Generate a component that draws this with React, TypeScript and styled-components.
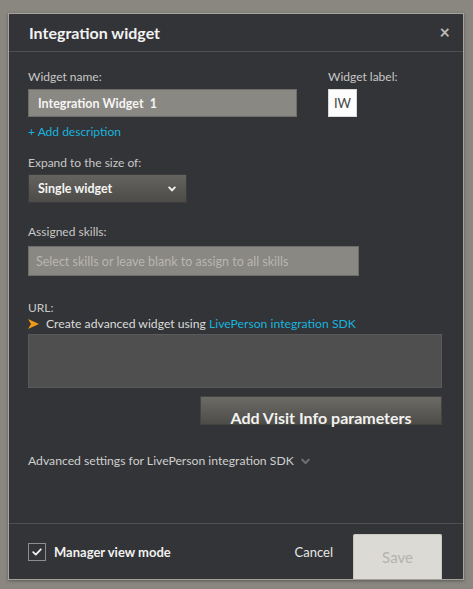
import React from "react";
import styled, { createGlobalStyle } from "styled-components";

const Global = createGlobalStyle`
  html, body { margin: 0; padding: 0; }
  body { font-family: Lato, "Open Sans", sans-serif; background: #8a8781; }
`;

const Page = styled.div`
  box-sizing: border-box;
  width: 473px;
  height: 589px;
  padding: 13px 9px 9px 8px;
  background: #8a8781;
  overflow: hidden;
`;

const Modal = styled.div`
  box-sizing: border-box;
  width: 456px;
  height: 567px;
  background: #333438;
  border: 1px solid #a6a39c;
  box-shadow: 0 1px 3px rgba(0, 0, 0, 0.35);
  display: flex;
  flex-direction: column;
`;

const Header = styled.div`
  height: 36px;
  display: flex;
  align-items: center;
  justify-content: space-between;
  padding: 0 13px 1px 20px;
  border-bottom: 1px solid #4f5054;
`;

const Title = styled.h1`
  margin: 0;
  font-size: 16px;
  font-weight: 700;
  color: #f2f2f2;
`;

const Close = styled.span`
  font-size: 18px;
  font-weight: 700;
  color: #bdbcb8;
  line-height: 1;
`;

const Body = styled.div`
  flex: 1;
  display: flex;
  flex-direction: column;
  padding: 18px 21px 0 19px;
`;

const Label = styled.div<{ $mt?: number; $mb?: number }>`
  font-size: 12px;
  line-height: 14px;
  color: #c8c8c6;
  margin-top: ${(p) => p.$mt ?? 0}px;
  margin-bottom: ${(p) => p.$mb ?? 5}px;
`;

const NameRow = styled.div`
  display: flex;
  gap: 31px;
`;

const Field = styled.div`
  display: flex;
  flex-direction: column;
`;

const TextInput = styled.div<{ $w: number; $h: number; $placeholder?: boolean }>`
  box-sizing: border-box;
  width: ${(p) => p.$w}px;
  height: ${(p) => p.$h}px;
  background: #8a8883;
  border: 1px solid #6e6d69;
  display: flex;
  align-items: center;
  padding-left: ${(p) => (p.$placeholder ? 7 : 9)}px;
  font-size: 12.5px;
  white-space: pre;
  font-weight: ${(p) => (p.$placeholder ? 400 : 700)};
  color: ${(p) => (p.$placeholder ? "#b8b6b0" : "#f5f5f3")};
`;

const LabelBox = styled.div`
  box-sizing: border-box;
  width: 29px;
  height: 28px;
  background: #fdfdfd;
  border: 1px solid #d8d8d8;
  display: flex;
  align-items: center;
  justify-content: center;
  font-size: 13px;
  color: #444;
`;

const Link = styled.span`
  color: #18b3dc;
`;

const AddDesc = styled.div`
  margin-top: 8px;
  font-size: 12px;
  line-height: 14px;
  color: #18b3dc;
`;

const Select = styled.div`
  box-sizing: border-box;
  width: 159px;
  height: 29px;
  background: linear-gradient(#64635f, #4c4b48);
  border: 1px solid #3c3c3c;
  display: flex;
  align-items: center;
  justify-content: space-between;
  padding: 0 10px 0 9px;
  font-size: 12.5px;
  font-weight: 700;
  color: #f5f5f3;
`;

const HintLine = styled.div`
  display: flex;
  align-items: center;
  gap: 7px;
  font-size: 12.2px;
  line-height: 14px;
  color: #dcdcda;
  margin-top: 2px;
`;

const UrlArea = styled.div`
  box-sizing: border-box;
  width: 414px;
  height: 54px;
  margin-top: 3px;
  background: #4f4f4f;
  border: 1px solid #5a5a5a;
`;

const WideButton = styled.div`
  box-sizing: border-box;
  align-self: flex-end;
  width: 242px;
  height: 29px;
  margin-top: 8px;
  background: linear-gradient(#6c6b66, #4d4c49);
  border: 1px solid #45443f;
  display: flex;
  justify-content: center;
  padding-top: 13px;
  font-size: 16px;
  font-weight: 700;
  color: #f2f2f0;
  line-height: 16px;
  white-space: nowrap;
`;

const Advanced = styled.div`
  display: flex;
  align-items: center;
  gap: 7px;
  margin-top: 29px;
  font-size: 12.2px;
  line-height: 14px;
  color: #cfcfcd;
`;

const Footer = styled.div`
  height: 55px;
  border-top: 1px solid #4f5054;
  display: flex;
  align-items: center;
  padding: 0 21px 0 19px;
`;

const Check = styled.div`
  box-sizing: border-box;
  width: 18px;
  height: 18px;
  border: 1px solid #8d8d8d;
  display: flex;
  align-items: center;
  justify-content: center;
`;

const CheckLabel = styled.span`
  margin-left: 8px;
  font-size: 13px;
  font-weight: 700;
  color: #f0f0ee;
  flex: 1;
`;

const Cancel = styled.span`
  font-size: 13px;
  color: #e6e6e4;
  margin-right: 20px;
`;

const Save = styled.div`
  box-sizing: border-box;
  align-self: flex-end;
  width: 89px;
  height: 45px;
  background: #dcdad5;
  border: 1px solid #c9c7c1;
  border-bottom: none;
  border-radius: 2px 2px 0 0;
  display: flex;
  align-items: center;
  justify-content: center;
  font-size: 15px;
  color: #b5b3ae;
`;

const Chevron = ({ color, size }: { color: string; size: number }) => (
  <svg width={size} height={size} viewBox="0 0 10 10">
    <path d="M1.5 3 L5 6.8 L8.5 3" fill="none" stroke={color} strokeWidth="2.4" strokeLinecap="round" strokeLinejoin="round" />
  </svg>
);

export default function App() {
  return (
    <>
      <Global />
      <Page>
        <Modal>
          <Header>
            <Title>Integration widget</Title>
            <Close>×</Close>
          </Header>
          <Body>
            <NameRow>
              <Field>
                <Label>Widget name:</Label>
                <TextInput $w={269} $h={28}>Integration Widget  1</TextInput>
              </Field>
              <Field>
                <Label>Widget label:</Label>
                <LabelBox>IW</LabelBox>
              </Field>
            </NameRow>
            <AddDesc>+ Add description</AddDesc>
            <Label $mt={17} $mb={4}>Expand to the size of:</Label>
            <Select>
              <span>Single widget</span>
              <Chevron color="#f0f0f0" size={8} />
            </Select>
            <Label $mt={22} $mb={7}>Assigned skills:</Label>
            <TextInput $w={331} $h={30} $placeholder>
              Select skills or leave blank to assign to all skills
            </TextInput>
            <Label $mt={25} $mb={0}>URL:</Label>
            <HintLine>
              <svg width="11" height="10" viewBox="0 0 11 10">
                <path d="M0 0 L11 5 L0 10 L3 5 Z" fill="#f29a18" />
              </svg>
              <span>
                Create advanced widget using <Link>LivePerson integration SDK</Link>
              </span>
            </HintLine>
            <UrlArea />
            <WideButton>Add Visit Info parameters</WideButton>
            <Advanced>
              <span>Advanced settings for LivePerson integration SDK</span>
              <Chevron color="#6e6e6e" size={9} />
            </Advanced>
          </Body>
          <Footer>
            <Check>
              <svg width="10" height="8" viewBox="0 0 10 8">
                <path d="M1.2 4.2 L3.8 6.6 L8.8 1.3" fill="none" stroke="#f0f0f0" strokeWidth="1.8" strokeLinecap="round" strokeLinejoin="round" />
              </svg>
            </Check>
            <CheckLabel>Manager view mode</CheckLabel>
            <Cancel>Cancel</Cancel>
            <Save>Save</Save>
          </Footer>
        </Modal>
      </Page>
    </>
  );
}
